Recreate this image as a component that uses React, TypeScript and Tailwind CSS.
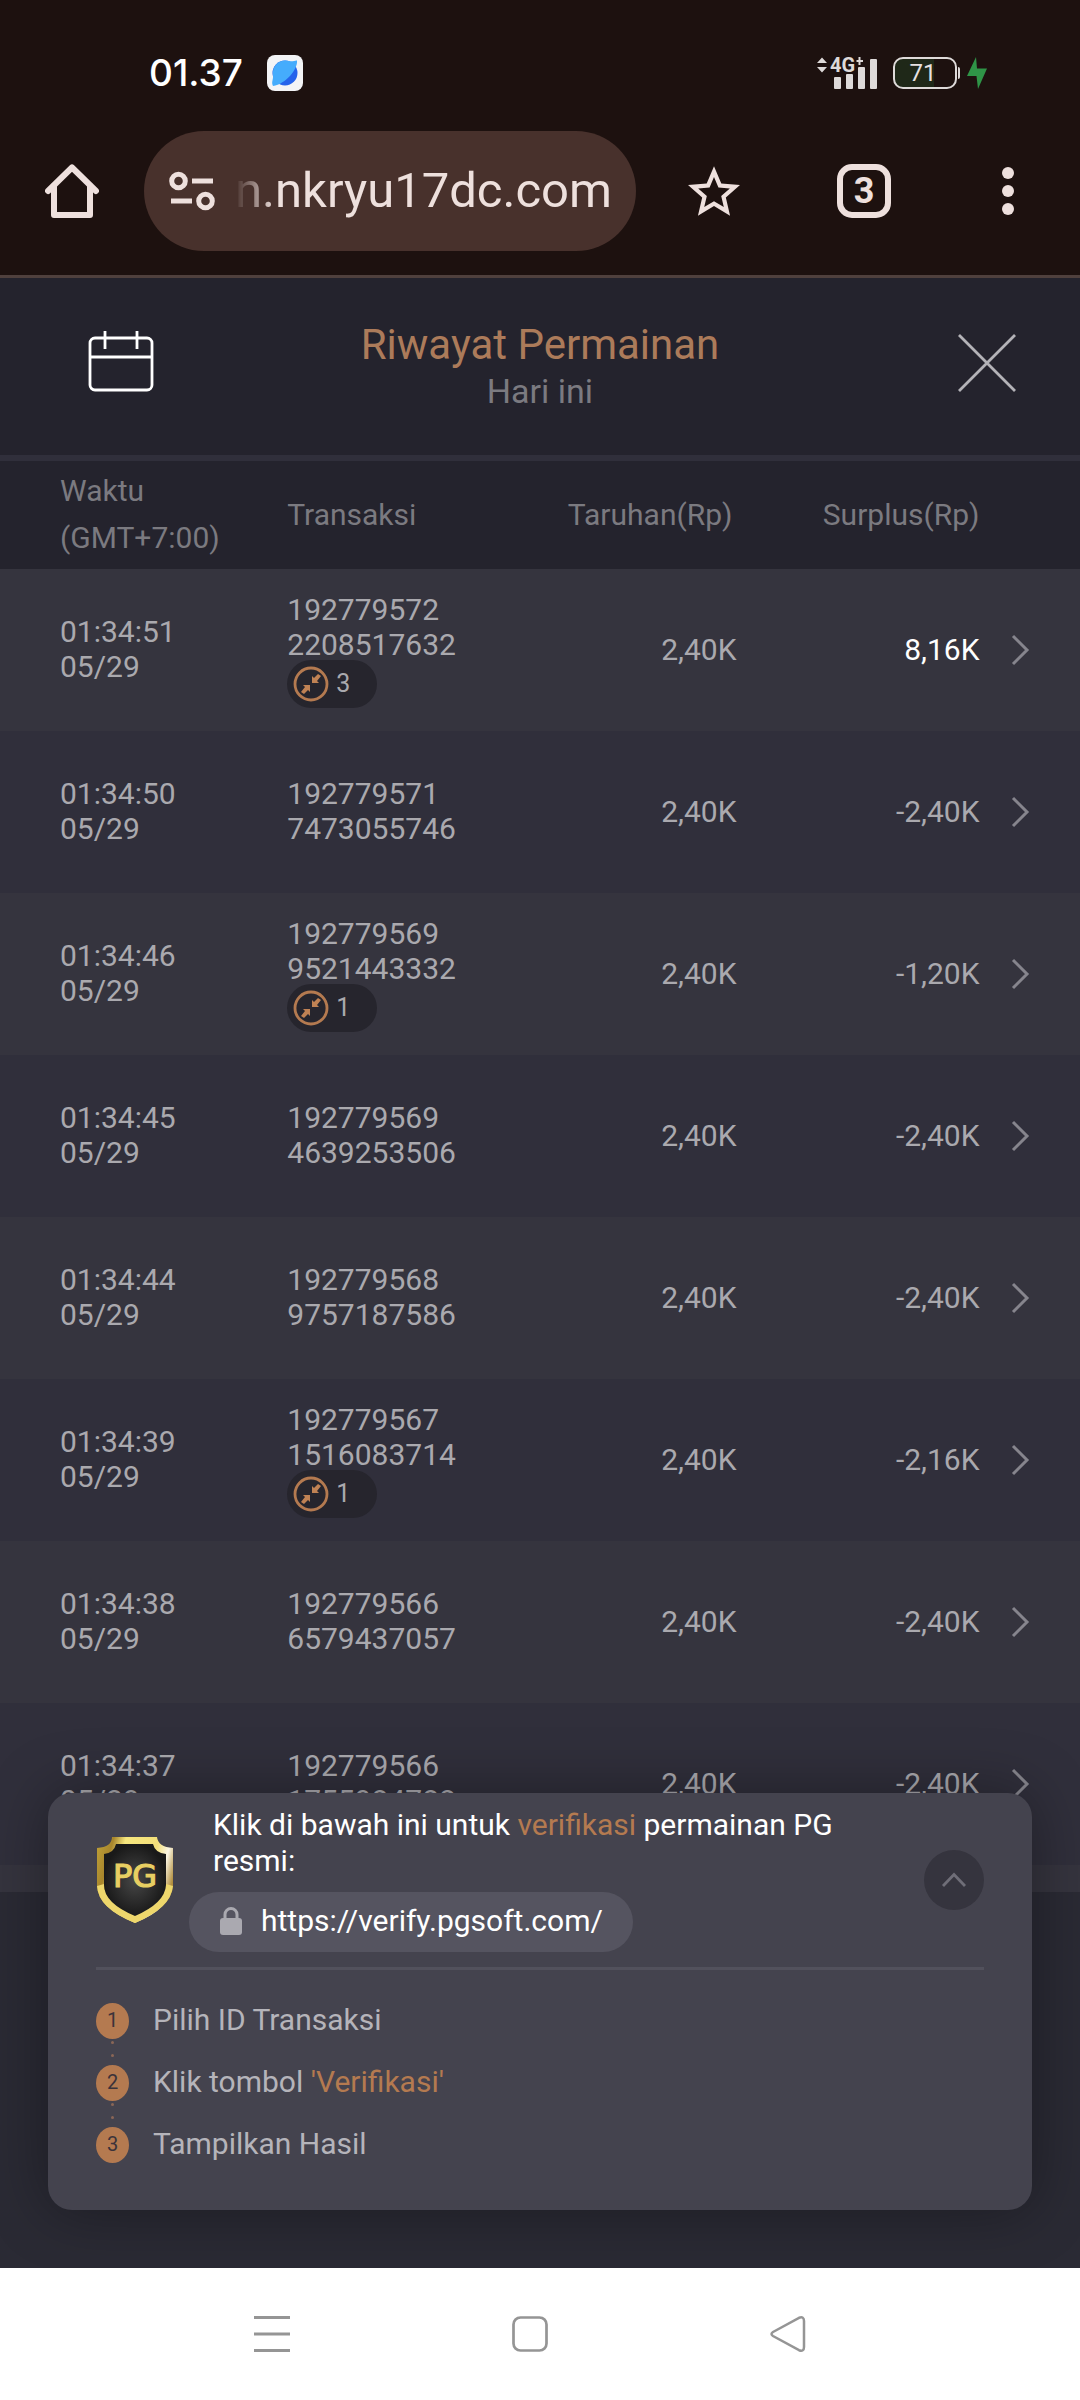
import type { ReactNode } from "react";

type Row = {
  time: string;
  tx: [string, string];
  spins?: number;
  bet: string;
  surplus: string;
};

const rows: Row[] = [
  { time: "01:34:51", tx: ["192779572", "2208517632"], spins: 3, bet: "2,40K", surplus: "8,16K" },
  { time: "01:34:50", tx: ["192779571", "7473055746"], bet: "2,40K", surplus: "-2,40K" },
  { time: "01:34:46", tx: ["192779569", "9521443332"], spins: 1, bet: "2,40K", surplus: "-1,20K" },
  { time: "01:34:45", tx: ["192779569", "4639253506"], bet: "2,40K", surplus: "-2,40K" },
  { time: "01:34:44", tx: ["192779568", "9757187586"], bet: "2,40K", surplus: "-2,40K" },
  { time: "01:34:39", tx: ["192779567", "1516083714"], spins: 1, bet: "2,40K", surplus: "-2,16K" },
  { time: "01:34:38", tx: ["192779566", "6579437057"], bet: "2,40K", surplus: "-2,40K" },
  { time: "01:34:37", tx: ["192779566", "1755984788"], bet: "2,40K", surplus: "-2,40K" },
];

function StatusBar() {
  return (
    <div className="flex h-9 items-center justify-between pr-[93px] pl-[149px]">
      <div className="flex items-center gap-6">
        <span className="font-['Inter'] text-[37px] leading-9 font-medium text-white">01.37</span>
        <svg width="36" height="36" viewBox="0 0 36 36" aria-hidden="true">
          <rect width="36" height="36" rx="8" fill="#f3f4f6" />
          <circle cx="18" cy="18" r="12.5" fill="#2563eb" />
          <path d="M6 31C4 27 6.500 25 6 20A12.500 12.500 0 0 1 22 6C26 7 28 5 30 5.500C31 14 19 29 6 31Z" fill="#45acfc" />
        </svg>
      </div>
      <div className="flex items-center">
        <svg width="60" height="45" viewBox="0 -6 60 45" fill="#dedad9" role="img" aria-label="Sinyal 4G+">
          <path d="M5 0.500L10 6H0ZM0 10H10L5 15.500Z" />
          <text x="13" y="15" fontFamily="Roboto, sans-serif" fontWeight="700" fontSize="20">4G</text>
          <path d="M39.500 3H41.500V0H43.500V3H46V5H43.500V8H41.500V5H39.500Z" />
          <rect x="17" y="20" width="7" height="12" rx="1" />
          <rect x="29" y="17" width="7" height="15" rx="1" />
          <rect x="41" y="10" width="7" height="22" rx="1" />
          <rect x="53" y="2" width="7" height="30" rx="1" />
        </svg>
        <div className="ml-4 flex items-center gap-px">
          <div className="flex h-8 w-16 items-center justify-center rounded-[10px] border-2 border-[#dedad9] bg-linear-to-r from-[#1f2818] from-65% to-transparent to-65% pr-1">
            <span className="font-['Roboto'] text-[24px] leading-7 text-[#e6e2e1]">71</span>
          </div>
          <span className="h-3 w-[2px] rounded-r bg-[#dedad9]" />
        </div>
        <svg className="ml-[7px]" width="20" height="32" viewBox="0 0 20 32" aria-hidden="true">
          <path d="M9 0L0 19H9.500L11 32L20 11.500H10Z" fill="#2f9447" />
        </svg>
      </div>
    </div>
  );
}

function BrowserBar() {
  return (
    <div className="mt-10 flex items-center pr-[66px] pl-[45px]">
      <button aria-label="Beranda">
        <svg width="54" height="54" viewBox="0 0 54 54" fill="none" stroke="#eee0dd" strokeWidth="6" strokeLinecap="round" strokeLinejoin="round">
          <path d="M3 27L27 3.500L51 27" />
          <path d="M9 22V51H45V22" />
        </svg>
      </button>
      <div className="mx-[45px] flex h-[120px] min-w-0 flex-1 items-center rounded-full bg-[#48312c] pr-6 pl-[25px]">
        <button aria-label="Info situs" className="shrink-0">
          <svg width="46" height="40" viewBox="0 0 46 40" fill="none" stroke="#eee0dd" strokeWidth="5">
            <circle cx="9.500" cy="10" r="6.800" />
            <path d="M23 10H44M2 30H23" />
            <circle cx="36.500" cy="30" r="6.800" />
          </svg>
        </button>
        <input
          aria-label="Alamat"
          readOnly
          value="n.nkryu17dc.com"
          className="ml-5 w-full min-w-0 flex-1 [mask-image:linear-gradient(to_right,transparent,black_40px)] bg-transparent text-right font-['Roboto'] text-[49px] leading-[60px] text-[#eee0dd] outline-none"
        />
      </div>
      <button aria-label="Markah" className="ml-[7px]">
        <svg width="52" height="50" viewBox="2 2 20 19" fill="#eee0dd">
          <path d="M22 9.240l-7.190-.620L12 2 9.190 8.630 2 9.240l5.460 4.730L5.820 21 12 17.270 18.180 21l-1.630-7.030L22 9.240zM12 15.400l-3.760 2.270 1-4.280-3.320-2.880 4.380-.380L12 6.100l1.710 4.040 4.380.380-3.320 2.880 1 4.280L12 15.400z" />
        </svg>
      </button>
      <button
        aria-label="Tab terbuka"
        className="ml-[97px] flex size-[54px] items-center justify-center rounded-[15px] border-6 border-[#eee0dd] font-['Roboto'] text-[36px] leading-9 font-bold text-[#eee0dd]"
      >
        3
      </button>
      <button aria-label="Menu lainnya" className="ml-[111px] flex flex-col gap-[6px]">
        <span className="size-3 rounded-full bg-[#eee0dd]" />
        <span className="size-3 rounded-full bg-[#eee0dd]" />
        <span className="size-3 rounded-full bg-[#eee0dd]" />
      </button>
    </div>
  );
}

function PageHeader() {
  return (
    <header className="grid h-[183px] grid-cols-[1fr_auto_1fr] items-center border-b-6 border-[#302f3b] bg-[#24232d] px-16">
      <button aria-label="Pilih tanggal" className="mb-3 ml-6 justify-self-start">
        <svg width="66" height="62" viewBox="0 0 66 62" fill="none" stroke="#fff" strokeWidth="2.800">
          <rect x="2" y="8" width="62" height="52" rx="5" />
          <path d="M2 27H64M17 1V19M49 1V19" />
        </svg>
      </button>
      <div className="text-center">
        <h1 className="text-[42px] leading-[48px] text-[#ac7b5a]">Riwayat Permainan</h1>
        <p className="text-[34px] leading-[44px] text-[#7b7a80]">Hari ini</p>
      </div>
      <button aria-label="Tutup" className="mb-2 justify-self-end">
        <svg width="58" height="58" viewBox="0 0 58 58" stroke="#b4b3b8" strokeWidth="2.800">
          <path d="M1 1L57 57M57 1L1 57" />
        </svg>
      </button>
    </header>
  );
}

function SpinBadge({ count }: { count: number }) {
  return (
    <span className="-mt-[2px] flex h-12 w-[90px] items-center gap-[7px] rounded-full bg-[#26252d] pl-[6px] text-[25px] leading-[30px]">
      <svg width="36" height="36" viewBox="0 0 36 36" aria-hidden="true">
        <circle cx="18" cy="18" r="16" fill="none" stroke="#b47a50" strokeWidth="2.800" />
        <path d="M8 26L12 21L10 19H17V26L15 24L11 28ZM28 10L24 15L26 17H19V10L21 12L25 8Z" fill="#c08254" />
      </svg>
      {count}
    </span>
  );
}

function HistoryTable() {
  return (
    <table className="w-full table-fixed border-collapse text-[30px]">
      <colgroup>
        <col className="w-[26.600%]" />
        <col className="w-[23.400%]" />
        <col className="w-[18.200%]" />
        <col className="w-[22.500%]" />
        <col className="w-[9.300%]" />
      </colgroup>
      <thead>
        <tr className="h-[108px] bg-[#24232d] leading-[47px] text-[#7b7a80]">
          <th className="pt-0 pb-[2px] pl-[60px] text-left font-normal">
            Waktu
            <br />
            (GMT+7:00)
          </th>
          <th className="pb-[2px] text-left font-normal">Transaksi</th>
          <th className="pr-1 pb-[2px] text-right font-normal whitespace-nowrap">Taruhan(Rp)</th>
          <th className="pb-[2px] text-right font-normal whitespace-nowrap">Surplus(Rp)</th>
          <th aria-label="Detail" />
        </tr>
      </thead>
      <tbody>
        {rows.map((r) => (
          <tr key={r.time} className="h-[162px] leading-[35px] text-[#aaa9ae] odd:bg-[#35343e] even:bg-[#302f3b]">
            <td className="pb-[2px] pl-[60px]">
              {r.time}
              <br />
              05/29
            </td>
            <td className={r.spins ? "" : "pb-[2px]"}>
              {r.tx[0]}
              <br />
              {r.tx[1]}
              {r.spins && <SpinBadge count={r.spins} />}
            </td>
            <td className="pb-[2px] text-right">{r.bet}</td>
            <td className={r.surplus.startsWith("-") ? "pb-[2px] text-right" : "pb-[2px] text-right text-white"}>
              {r.surplus}
            </td>
            <td className="pl-[30px]">
              <button aria-label={"Lihat detail " + r.time} className="block">
                <svg width="20" height="32" viewBox="0 0 20 32" fill="none" stroke="#86858d" strokeWidth="3">
                  <path d="M3 2L17 16L3 30" />
                </svg>
              </button>
            </td>
          </tr>
        ))}
      </tbody>
    </table>
  );
}

function PgShield() {
  return (
    <svg className="shrink-0" width="78" height="88" viewBox="0 0 78 88" role="img" aria-label="PG">
      <defs>
        <linearGradient id="gold" x1="0" y1="0.200" x2="1" y2="0.500">
          <stop offset="0" stopColor="#b99a35" />
          <stop offset="0.150" stopColor="#a8862c" />
          <stop offset="0.300" stopColor="#f6e67e" />
          <stop offset="0.700" stopColor="#f3df7a" />
          <stop offset="0.850" stopColor="#fbf6e4" />
          <stop offset="1" stopColor="#b18d3c" />
        </linearGradient>
        <radialGradient id="dark">
          <stop offset="0" stopColor="#474747" />
          <stop offset="1" stopColor="#191919" />
        </radialGradient>
      </defs>
      <path d="M16 1H61Q62 11 77 12V50Q75 72 39 87Q2 72 1 50V12Q16 11 16 1Z" fill="url(#gold)" />
      <path d="M1 50Q2 72 39 87Q75 72 77 50L70 48Q69 67 39 80Q8 67 8 48Z" fill="#eed76c" />
      <path d="M20 8H57Q59 17 70 18V49Q69 67 39 80Q8 67 8 49V18Q18 17 20 8Z" fill="url(#dark)" />
      <text
        x="39"
        y="51"
        textAnchor="middle"
        fontFamily="'DejaVu Sans', sans-serif"
        fontSize="32"
        fill="#e8cf62"
        stroke="#e8cf62"
        strokeWidth="1.200"
      >
        PG
      </text>
    </svg>
  );
}

function Step({ n, last, children }: { n: number; last?: boolean; children: ReactNode }) {
  return (
    <li className="flex gap-6">
      <div className="flex flex-col items-center">
        <span className="flex h-9 w-[33px] items-center justify-center rounded-[50%] bg-[#b47a50] pb-[2px] text-[20px] leading-6 text-[#3b333a]">
          {n}
        </span>
        {!last && (
          <span className="flex h-[26px] flex-col gap-[10px] pt-[2px]">
            <span className="size-[3px] rounded-full bg-[#8a6656]" />
            <span className="size-[3px] rounded-full bg-[#8a6656]" />
          </span>
        )}
      </div>
      <span className="leading-[34px]">{children}</span>
    </li>
  );
}

function VerifyPanel() {
  return (
    <aside className="absolute inset-x-12 bottom-[58px] rounded-3xl bg-[#44434e] px-12 pt-[14px] pb-[47px] text-[30px] shadow-[0_0_60px_rgba(0,0,0,0.35)]">
      <div className="flex items-center border-b-3 border-[#52515c] pb-[15px]">
        <PgShield />
        <div className="ml-[15px] min-w-0 flex-1">
          <p className="pl-6 leading-9 text-white">
            Klik di bawah ini untuk <span className="text-[#b47a50]">verifikasi</span> permainan PG resmi:
          </p>
          <a
            href="https://verify.pgsoft.com/"
            className="mt-[13px] inline-flex h-[60px] items-center rounded-full bg-[#555460] pr-[30px] pb-[2px] pl-[30px] align-top leading-9 text-white"
          >
            <svg className="mr-[18px]" width="24" height="28" viewBox="0 0 24 28" aria-hidden="true">
              <rect x="1" y="11" width="22" height="17" rx="3" fill="#aaa9b0" />
              <path d="M6 12V7.500A6 6 0 0 1 18 7.500V12" fill="none" stroke="#aaa9b0" strokeWidth="3" />
            </svg>
            https://verify.pgsoft.com/
          </a>
        </div>
        <button aria-label="Ciutkan" className="ml-10 flex size-[60px] shrink-0 items-center justify-center rounded-full bg-[#35343e]">
          <svg width="26" height="16" viewBox="0 0 26 16" fill="none" stroke="#6f6e78" strokeWidth="2.800">
            <path d="M2 14L13 2.500L24 14" />
          </svg>
        </button>
      </div>
      <ol className="mt-[33px] text-[#b5b4ba]">
        <Step n={1}>Pilih ID Transaksi</Step>
        <Step n={2}>
          Klik tombol <span className="text-[#b47a50]">'Verifikasi'</span>
        </Step>
        <Step n={3} last>
          Tampilkan Hasil
        </Step>
      </ol>
    </aside>
  );
}

function SystemNav() {
  return (
    <nav className="flex h-[132px] items-center justify-center gap-[222px] bg-white pr-5">
      <button aria-label="Aplikasi terbaru">
        <svg width="36" height="38" viewBox="0 0 36 38" stroke="#959595" strokeWidth="3">
          <path d="M0 2.500H36M0 19H36M0 35.500H36" />
        </svg>
      </button>
      <button aria-label="Layar utama">
        <svg width="36" height="38" viewBox="0 0 36 38" fill="none" stroke="#959595" strokeWidth="2.700">
          <rect x="1.500" y="2.500" width="33" height="33" rx="7" />
        </svg>
      </button>
      <button aria-label="Kembali">
        <svg width="36" height="38" viewBox="0 0 36 38" fill="none" stroke="#959595" strokeWidth="2.500">
          <path d="M3 17L29 2.800Q34 1 34 6V32Q34 37 29 35.200L3 21Q0 19 3 17Z" />
        </svg>
      </button>
    </nav>
  );
}

export default function App() {
  return (
    <div className="flex min-h-screen flex-col bg-[#2a2a34] font-['Roboto',sans-serif]">
      <div className="border-b-3 border-[#4f403d] bg-[#1d110f] pt-[55px] pb-6">
        <StatusBar />
        <BrowserBar />
      </div>
      <main className="relative flex-1 overflow-hidden">
        <PageHeader />
        <HistoryTable />
        <div className="h-[27px] bg-[#35343e]" />
        <VerifyPanel />
      </main>
      <SystemNav />
    </div>
  );
}
